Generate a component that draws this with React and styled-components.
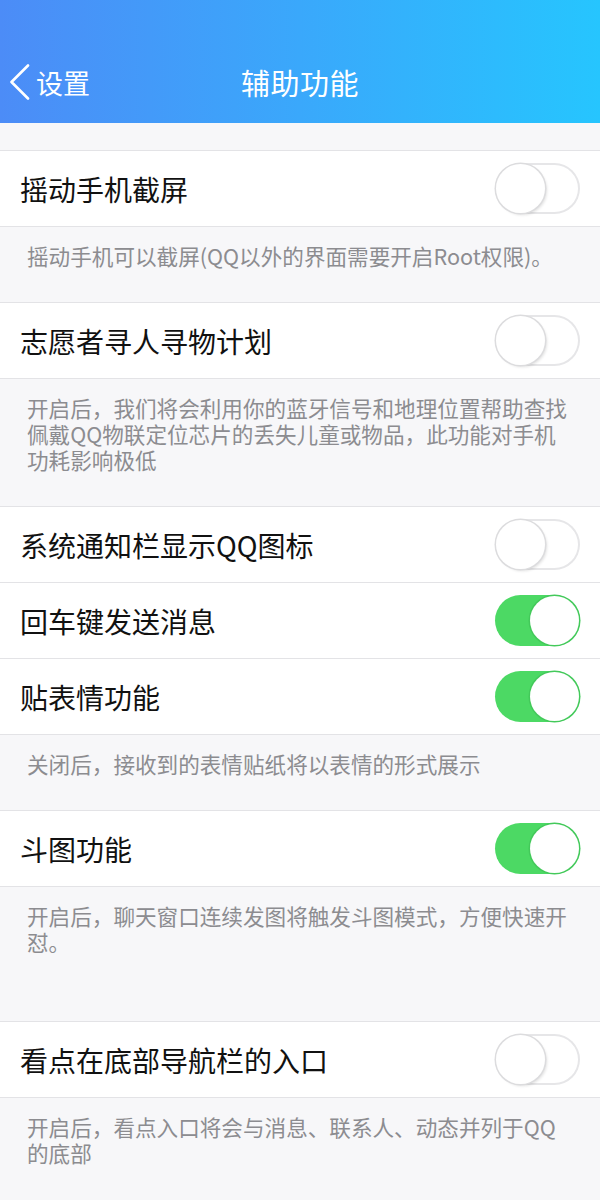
import React from "react";
import styled, { createGlobalStyle } from "styled-components";

const Global = createGlobalStyle`
  html, body { margin: 0; padding: 0; background: #f7f7f9; }
  body { font-family: "Noto Sans CJK SC", "Noto Sans", sans-serif; -webkit-font-smoothing: antialiased; }
  * { box-sizing: border-box; }
`;

const Page = styled.div`
  width: 600px;
  min-height: 1200px;
  background: #f7f7f9;
  display: flex;
  flex-direction: column;
`;

const Header = styled.header`
  height: 123px;
  padding-top: 41px;
  background: linear-gradient(90deg, #4c8cf7 0%, #3aa8fb 50%, #26c5fe 100%);
  color: #fff;
`;

const NavBar = styled.div`
  height: 82px;
  display: grid;
  grid-template-columns: 1fr auto 1fr;
  align-items: center;
`;

const Back = styled.div`
  display: flex;
  align-items: center;
  gap: 6px;
  padding-left: 9px;
  font-size: 27px;
  line-height: 1;
`;

const Title = styled.div`
  font-size: 29px;
  line-height: 1;
  letter-spacing: 0.5px;
`;

const TopGap = styled.div`
  height: 27px;
`;

const Group = styled.section`
  background: #fff;
  border-top: 1px solid #e3e3e6;
`;

const Row = styled.div`
  height: 76px;
  border-bottom: 1px solid #e3e3e6;
  display: flex;
  align-items: center;
  justify-content: space-between;
  padding: 0 20px 0 20px;
`;

const Label = styled.div`
  font-size: 28px;
  color: #111;
  line-height: 1;
`;

const Desc = styled.div`
  background: #f7f7f9;
  color: #8c8c90;
  font-size: 21.6px;
  line-height: 26px;
  padding: 16px 28px ${(p) => (p.$extra ? 66 : 33)}px 27px;
`;

const Track = styled.div`
  position: relative;
  width: 85px;
  height: 51px;
  border-radius: 26px;
  background: ${(p) => (p.$on ? "#4cd964" : "#ffffff")};
  box-shadow: ${(p) => (p.$on ? "none" : "inset 0 0 0 2px #e6e6e8")};
  flex-shrink: 0;
`;

const Knob = styled.div`
  position: absolute;
  top: 1px;
  left: ${(p) => (p.$on ? "35px" : "1px")};
  width: 49px;
  height: 49px;
  border-radius: 50%;
  background: #fff;
  box-shadow: ${(p) =>
    p.$on
      ? "0 0 0 1.5px #43c95a"
      : "0 0 0 1.5px #dcdcde, 2px 2px 3px rgba(0,0,0,0.12)"};
`;

const Switch = ({ on }) => (
  <Track $on={on}>
    <Knob $on={on} />
  </Track>
);

const Chevron = () => (
  <svg width="21" height="36" viewBox="0 0 21 36" fill="none">
    <polyline
      points="19,1.5 2.5,18 19,34.5"
      stroke="#fff"
      strokeWidth="2.6"
      strokeLinecap="round"
      strokeLinejoin="round"
    />
  </svg>
);

const groups = [
  {
    rows: [{ label: "摇动手机截屏", on: false }],
    desc: "摇动手机可以截屏(QQ以外的界面需要开启Root权限)。",
  },
  {
    rows: [{ label: "志愿者寻人寻物计划", on: false }],
    desc: "开启后，我们将会利用你的蓝牙信号和地理位置帮助查找佩戴QQ物联定位芯片的丢失儿童或物品，此功能对手机功耗影响极低",
  },
  {
    rows: [
      { label: "系统通知栏显示QQ图标", on: false },
      { label: "回车键发送消息", on: true },
      { label: "贴表情功能", on: true },
    ],
    desc: "关闭后，接收到的表情贴纸将以表情的形式展示",
  },
  {
    rows: [{ label: "斗图功能", on: true }],
    desc: "开启后，聊天窗口连续发图将触发斗图模式，方便快速开怼。",
    extra: true,
  },
  {
    rows: [{ label: "看点在底部导航栏的入口", on: false }],
    desc: "开启后，看点入口将会与消息、联系人、动态并列于QQ的底部",
  },
];

export default function App() {
  return (
    <Page>
      <Global />
      <Header>
        <NavBar>
          <Back>
            <Chevron />
            <span>设置</span>
          </Back>
          <Title>辅助功能</Title>
          <div />
        </NavBar>
      </Header>
      <TopGap />
      {groups.map((g, i) => (
        <React.Fragment key={i}>
          <Group>
            {g.rows.map((r) => (
              <Row key={r.label}>
                <Label>{r.label}</Label>
                <Switch on={r.on} />
              </Row>
            ))}
          </Group>
          <Desc $extra={g.extra}>{g.desc}</Desc>
        </React.Fragment>
      ))}
    </Page>
  );
}
